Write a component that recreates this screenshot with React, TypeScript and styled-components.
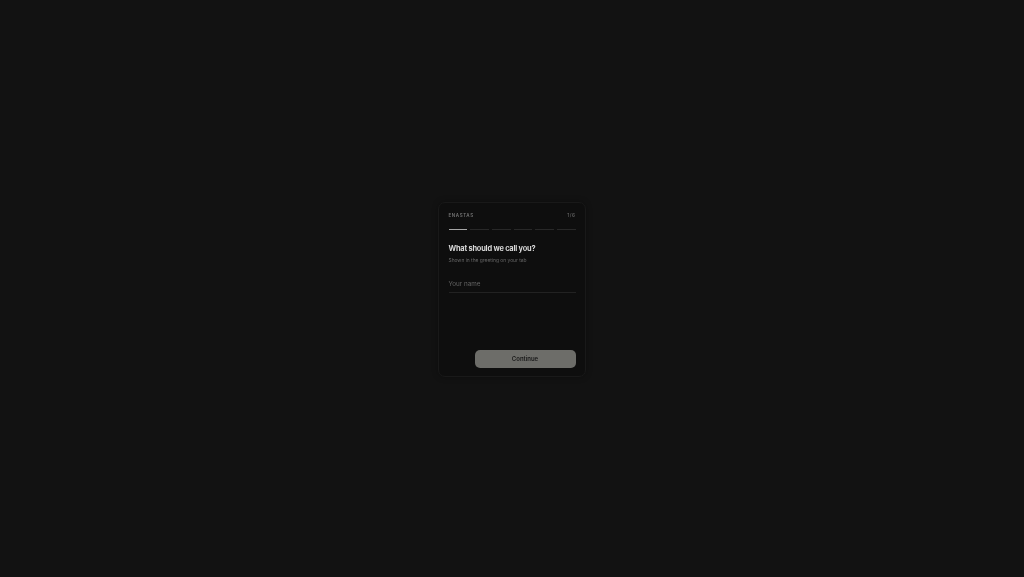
import React from "react";
import styled, { createGlobalStyle } from "styled-components";

const Global = createGlobalStyle`
  html, body, #root {
    margin: 0;
    height: 100%;
  }
  body {
    background: #121212;
    font-family: "Inter", "Liberation Sans", sans-serif;
  }
`;

const Page = styled.div`
  height: 577px;
  display: flex;
  align-items: flex-start;
  justify-content: center;
  padding-top: 202px;
  box-sizing: border-box;
`;

const Card = styled.div`
  width: 148px;
  height: 175px;
  box-sizing: border-box;
  padding: 8.5px 9.5px 8px 9.5px;
  display: flex;
  flex-direction: column;
  background: #0e0e0e;
  border: 1px solid #191919;
  border-radius: 7px;
  box-shadow: 0 0 6px rgba(0, 0, 0, 0.3);
  filter: blur(0.35px);
`;

const Header = styled.div`
  display: flex;
  justify-content: space-between;
  align-items: center;
  height: 7px;
`;

const Brand = styled.span`
  font-size: 4.5px;
  line-height: 7px;
  letter-spacing: 0.6px;
  color: #767676;
  font-weight: 600;
`;

const Count = styled.span`
  font-size: 4.8px;
  line-height: 7px;
  letter-spacing: 0.5px;
  color: #767676;
`;

const Steps = styled.div`
  display: flex;
  gap: 3px;
  margin-top: 10.5px;
`;

const Step = styled.div<{ $active?: boolean }>`
  flex: 1;
  height: 1px;
  background: ${({ $active }) => ($active ? "#a6a6a6" : "#282828")};
`;

const Title = styled.h1`
  margin: 12.5px 0 0;
  font-size: 7.4px;
  line-height: 11px;
  letter-spacing: -0.2px;
  font-weight: 700;
  color: #d8d8d8;
`;

const Sub = styled.p`
  margin: 3px 0 0;
  font-size: 4.9px;
  line-height: 7px;
  color: #666666;
`;

const Field = styled.div`
  margin-top: 12.5px;
  height: 17px;
  box-sizing: border-box;
  padding-top: 4px;
  border-bottom: 1px solid #222222;
  font-size: 6.3px;
  line-height: 9px;
  color: #646464;
`;

const Footer = styled.div`
  margin-top: auto;
  display: flex;
  justify-content: flex-end;
`;

const Button = styled.button`
  width: 101px;
  height: 18px;
  padding: 0 0 1px;
  border: none;
  border-radius: 5px;
  background: #6d6d69;
  color: #181818;
  font-family: inherit;
  font-size: 6px;
  font-weight: 600;
`;

export default function App() {
  return (
    <>
      <Global />
      <Page>
        <Card>
          <Header>
            <Brand>ENASTAS</Brand>
            <Count>1/6</Count>
          </Header>
          <Steps>
            <Step $active />
            <Step />
            <Step />
            <Step />
            <Step />
            <Step />
          </Steps>
          <Title>What should we call you?</Title>
          <Sub>Shown in the greeting on your tab</Sub>
          <Field>Your name</Field>
          <Footer>
            <Button>Continue</Button>
          </Footer>
        </Card>
      </Page>
    </>
  );
}
